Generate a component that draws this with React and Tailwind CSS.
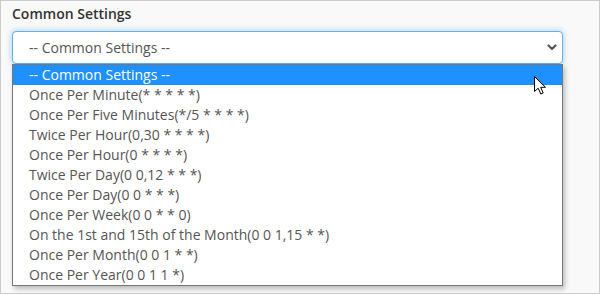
import React from 'react';

const options = [
    'Once Per Minute(* * * * *)',
    'Once Per Five Minutes(*/5 * * * *)',
    'Twice Per Hour(0,30 * * * *)',
    'Once Per Hour(0 * * * *)',
    'Twice Per Day(0 0,12 * * *)',
    'Once Per Day(0 0 * * *)',
    'Once Per Week(0 0 * * 0)',
    'On the 1st and 15th of the Month(0 0 1,15 * *)',
    'Once Per Month(0 0 1 * *)',
    'Once Per Year(0 0 1 1 *)'
];

const App = () => {
    return (
        <div
            className="w-[600px] h-[294px] border border-[#cccccc] bg-[#f9f9f9] px-[11px] pt-[3px] text-[14px]"
            style={{ fontFamily: '"Open Sans", "Liberation Sans", sans-serif' }}
        >
            <label className="block font-semibold leading-[20px] text-[#333333] mb-[7px]">Common Settings</label>

            <div className="relative w-[551px]">
                {/* Closed select */}
                <div className="h-[33px] flex items-center justify-between rounded-[4px] border border-[#66afe9] bg-white pl-[16px] pr-[5px] text-[#555555] shadow-[0_0_6px_rgba(102,175,233,0.6)]">
                    <span>-- Common Settings --</span>
                    <svg width="10" height="7" viewBox="0 0 10 7" fill="none" stroke="#555555" strokeWidth="2.2" strokeLinecap="round" strokeLinejoin="round">
                        <path d="M1.5 1.5L5 5L8.5 1.5" />
                    </svg>
                </div>

                {/* Open option list */}
                <div className="absolute left-0 top-[33px] w-[551px] border border-[#767676] bg-white shadow-[2px_3px_5px_rgba(0,0,0,0.25)] z-10">
                    <div className="h-[20px] leading-[20px] pl-[16px] bg-[#1e90ff] text-white">-- Common Settings --</div>
                    {options.map((opt, i) => (
                        <div key={i} className="h-[20px] leading-[20px] pl-[16px] text-[#555555] whitespace-nowrap">{opt}</div>
                    ))}

                    {/* Mouse pointer */}
                    <svg className="absolute left-[521px] top-[11px]" width="14" height="19" viewBox="0 0 14 19">
                        <path d="M0.5 0.5L0.5 15.5L4.2 12.2L6.8 18L9.2 17L6.7 11.3L11.5 11.3Z" fill="white" stroke="black" strokeWidth="1" strokeLinejoin="round" />
                    </svg>
                </div>
            </div>
        </div>
    );
};

export default App;
